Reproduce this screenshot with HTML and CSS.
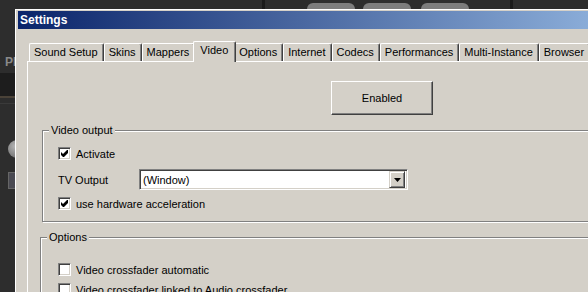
FILE: index.html
```html
<!DOCTYPE html>
<html lang="en">
<head>
  <meta charset="UTF-8">
  <title>Settings</title>
  <link rel="stylesheet" href="styles.css">
</head>
<body>
  <div class="app">
    <span class="app__rule app__rule--left"></span>
    <span class="app__rule app__rule--right"></span>
    <span class="app__pill app__pill--mute"></span>
    <span class="app__pill app__pill--mode"></span>
    <span class="app__pill app__pill--create"></span>
    <span class="app__side"></span>
    <span class="app__label">PL</span>
    <span class="app__band"></span>
    <span class="app__knob"></span>
    <span class="app__key"></span>
  </div>

  <div class="window">
    <div class="window__title">Settings</div>
    <div class="window__body">
      <div class="tabs">
        <div class="tab">Sound Setup</div>
        <div class="tab">Skins</div>
        <div class="tab">Mappers</div>
        <div class="tab tab--active">Video</div>
        <div class="tab">Options</div>
        <div class="tab">Internet</div>
        <div class="tab">Codecs</div>
        <div class="tab">Performances</div>
        <div class="tab">Multi-Instance</div>
        <div class="tab">Browser</div>
      </div>

      <div class="panel">
        <button class="btn btn--enabled">Enabled</button>

        <div class="group group--video">
          <div class="group__title">Video output</div>
          <label class="check-row check-row--first">
            <span class="check">
              <svg width="7" height="7" viewBox="0 0 7 7"><polygon points="0,2 2,4 6,0 7,0 7,3 3,7 2,7 0,5" fill="#000"/></svg>
            </span>
            Activate
          </label>
          <div class="field-row">
            <span class="field-row__label">TV Output</span>
            <div class="combo">
              <span class="combo__value">(Window)</span>
              <span class="combo__btn">
                <svg width="7" height="4" viewBox="0 0 7 4"><polygon points="0,0 7,0 3.5,4" fill="#000"/></svg>
              </span>
            </div>
          </div>
          <label class="check-row check-row--tight">
            <span class="check">
              <svg width="7" height="7" viewBox="0 0 7 7"><polygon points="0,2 2,4 6,0 7,0 7,3 3,7 2,7 0,5" fill="#000"/></svg>
            </span>
            use hardware acceleration
          </label>
        </div>

        <div class="group group--options">
          <div class="group__title">Options</div>
          <label class="check-row check-row--spaced">
            <span class="check"></span>
            Video crossfader automatic
          </label>
          <label class="check-row check-row--tight">
            <span class="check"></span>
            Video crossfader linked to Audio crossfader
          </label>
        </div>
      </div>
    </div>
  </div>
</body>
</html>
```

FILE: styles.css
```css
html {
  box-sizing: border-box;
}

*, *:before, *:after {
  box-sizing: inherit;
}

body {
  margin: 0;
  width: 588px;
  height: 292px;
  overflow: hidden;
  position: relative;
  background: #2d2d2d;
  font-family: "Liberation Sans", Arial, sans-serif;
  font-size: 11px;
  color: #000;
}

/* the player behind the dialog */
.app__rule {
  position: absolute;
  top: 0;
  width: 3px;
  height: 9px;
  background: #1b1b1b;
}

.app__rule--left { left: 262px; }
.app__rule--right { left: 510px; }

.app__pill {
  position: absolute;
  top: 3px;
  width: 48px;
  height: 12px;
  border-radius: 6px;
  background: #7d7d7d;
}

.app__pill--mute { left: 307px; }
.app__pill--mode { left: 363px; }
.app__pill--create { left: 421px; }

.app__side {
  position: absolute;
  left: 0;
  top: 73px;
  width: 15px;
  height: 25px;
  background: #1d1d1d;
  border-bottom: 2px solid #4a4238;
}

.app__label {
  position: absolute;
  left: 5px;
  top: 55px;
  color: #8a8a8a;
  font-weight: bold;
  font-size: 12px;
}

.app__band {
  position: absolute;
  left: 0;
  top: 103px;
  width: 15px;
  height: 1px;
  background: #3a3a3a;
}

.app__knob {
  position: absolute;
  left: 8px;
  top: 140px;
  width: 18px;
  height: 18px;
  border-radius: 50%;
  background: radial-gradient(circle at 40% 35%, #b5b5b5, #5e5e5e);
}

.app__key {
  position: absolute;
  left: 8px;
  top: 172px;
  width: 16px;
  height: 17px;
  background: #4a4a52;
  border: 1px solid #666;
}

/* dialog */
.window {
  position: absolute;
  left: 15px;
  top: 9px;
  width: 700px;
  height: 400px;
  background: #d4d0c8;
  border-top: 1px solid #fff;
  border-left: 1px solid #fff;
  padding: 1px 0 0 2px;
}

.window__title {
  height: 18px;
  line-height: 18px;
  padding-left: 2px;
  color: #fff;
  font-weight: bold;
  font-size: 12px;
  background: linear-gradient(90deg, #0a246a, #a6caf0);
}

.window__body {
  padding: 12px 0 0 9px;
}

.tabs {
  display: flex;
  align-items: flex-end;
  height: 20px;
  padding-left: 2px;
}

.tab {
  height: 18px;
  line-height: 17px;
  padding: 0 5px 0 4px;
  white-space: nowrap;
  border: 1px solid #fff;
  border-bottom: 0;
  border-right-color: #404040;
  border-radius: 2px 2px 0 0;
  box-shadow: inset -1px 0 #808080;
}

.tab--active {
  position: relative;
  z-index: 1;
  height: 21px;
  line-height: 16px;
  margin: 0 -2px -1px;
  padding: 0 7px 0 6px;
  background: #d4d0c8;
}

.panel {
  height: 300px;
  border-top: 1px solid #fff;
  border-left: 1px solid #fff;
}

.btn {
  display: flex;
  align-items: center;
  justify-content: center;
  width: 102px;
  height: 34px;
  margin: 19px 0 0 303px;
  padding: 0;
  font: inherit;
  color: #000;
  background: #d4d0c8;
  border: 1px solid #fff;
  border-right-color: #404040;
  border-bottom-color: #404040;
  box-shadow: inset -1px -1px #808080;
}

.group {
  width: 600px;
  border: 1px solid #808080;
  box-shadow: inset 1px 1px #fff, 1px 1px #fff;
}

.group__title {
  display: table;
  line-height: 13px;
  padding: 0 2px;
  background: #d4d0c8;
}

.group--video {
  margin: 15px 0 0 14px;
  padding: 0 0 11px 15px;
}

.group--video .group__title {
  margin: -7px 0 0 -9px;
}

.group--options {
  margin: 15px 0 0 12px;
  padding: 0 0 20px 17px;
}

.group--options .group__title {
  margin: -7px 0 0 -11px;
}

.check-row {
  display: flex;
  align-items: center;
  gap: 5px;
  height: 13px;
  white-space: nowrap;
}

.check-row--first { margin-top: 10px; }
.check-row--tight { margin-top: 7px; }
.check-row--spaced { margin-top: 19px; }

.check {
  display: flex;
  align-items: center;
  justify-content: center;
  width: 13px;
  height: 13px;
  background: #fff;
  border: 1px solid #808080;
  border-right-color: #fff;
  border-bottom-color: #fff;
  box-shadow: inset 1px 1px #404040, inset -1px -1px #d4d0c8;
}

.field-row {
  display: flex;
  align-items: center;
  margin-top: 9px;
}

.field-row__label {
  width: 81px;
}

.combo {
  display: flex;
  align-items: center;
  justify-content: space-between;
  width: 269px;
  height: 21px;
  padding: 2px;
  background: #fff;
  border: 1px solid #808080;
  border-right-color: #fff;
  border-bottom-color: #fff;
  box-shadow: inset 1px 1px #404040, inset -1px -1px #d4d0c8;
}

.combo__value {
  padding-left: 1px;
}

.combo__btn {
  display: flex;
  align-items: center;
  justify-content: center;
  width: 16px;
  height: 17px;
  background: #d4d0c8;
  border: 1px solid #d4d0c8;
  border-right-color: #404040;
  border-bottom-color: #404040;
  box-shadow: inset 1px 1px #fff, inset -1px -1px #808080;
}
```
